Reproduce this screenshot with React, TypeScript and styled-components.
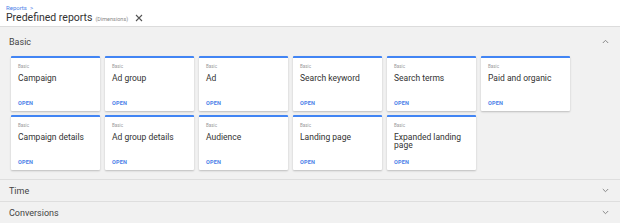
import React from 'react';
import styled, { createGlobalStyle } from 'styled-components';

const GlobalStyle = createGlobalStyle`
  html, body {
    margin: 0;
    padding: 0;
    background: #f1f1f1;
    font-family: Roboto, "Liberation Sans", sans-serif;
  }
`;

const Page = styled.div`
  width: 620px;
  height: 223px;
  overflow: hidden;
  background: #f1f1f1;
`;

const Header = styled.div`
  height: 27px;
  background: #fff;
  border-bottom: 1px solid #dcdcdc;
  padding: 4px 0 0 6px;
  box-sizing: border-box;
`;

const Crumb = styled.div`
  font-size: 6px;
  color: #4a80e8;
  line-height: 7px;
`;

const TitleRow = styled.div`
  display: flex;
  align-items: center;
  gap: 6px;
`;

const Title = styled.span`
  font-size: 10.5px;
  color: #333;
`;

const Sub = styled.span`
  font-size: 5.5px;
  color: #888;
  margin-left: -3px;
  margin-top: 2px;
`;

const Section = styled.div`
  border-bottom: 1px solid #dedede;
`;

const SectionHead = styled.div<{ $h: number }>`
  height: ${p => p.$h}px;
  display: flex;
  align-items: center;
  justify-content: space-between;
  padding: 0 11px 0 9px;
  font-size: 9px;
  color: #444;
`;

const Grid = styled.div`
  display: grid;
  grid-template-columns: repeat(6, 89px);
  column-gap: 5px;
  row-gap: 4px;
  padding: 0 0 9px 11px;
`;

const Card = styled.div`
  background: #fff;
  border-top: 2px solid #4285f4;
  border-radius: 1px;
  box-shadow: 0 1px 2px rgba(0, 0, 0, 0.22);
  padding: 6px 7px 0 7px;
  height: 47px;
  display: flex;
  flex-direction: column;
`;

const Kind = styled.div`
  font-size: 4.5px;
  color: #999;
  line-height: 6px;
`;

const CardTitle = styled.div`
  font-size: 8.5px;
  color: #333;
  line-height: 8px;
  margin-top: 4px;
  flex: 1;
`;

const Open = styled.div`
  font-size: 5.5px;
  font-weight: 700;
  color: #4a80e8;
  letter-spacing: 0.2px;
  margin-bottom: 5px;
`;

const Chevron = ({ up }: { up?: boolean }) => (
  <svg width="7" height="5" viewBox="0 0 7 5">
    <path
      d={up ? 'M0.8 4 L3.5 1.3 L6.2 4' : 'M0.8 1 L3.5 3.7 L6.2 1'}
      fill="none"
      stroke="#888"
      strokeWidth="1"
    />
  </svg>
);

const reports = [
  'Campaign',
  'Ad group',
  'Ad',
  'Search keyword',
  'Search terms',
  'Paid and organic',
  'Campaign details',
  'Ad group details',
  'Audience',
  'Landing page',
  'Expanded landing page',
];

export default function App() {
  return (
    <Page>
      <GlobalStyle />
      <Header>
        <Crumb>Reports &nbsp;&gt;</Crumb>
        <TitleRow>
          <Title>Predefined reports</Title>
          <Sub>(Dimensions)</Sub>
          <svg width="8" height="8" viewBox="0 0 8 8" style={{ marginLeft: 1 }}>
            <path d="M1 1 L7 7 M7 1 L1 7" stroke="#555" strokeWidth="1.1" />
          </svg>
        </TitleRow>
      </Header>
      <Section>
        <SectionHead $h={29}>
          <span>Basic</span>
          <Chevron up />
        </SectionHead>
        <Grid>
          {reports.map(r => (
            <Card key={r}>
              <Kind>Basic</Kind>
              <CardTitle>{r}</CardTitle>
              <Open>OPEN</Open>
            </Card>
          ))}
        </Grid>
      </Section>
      <Section>
        <SectionHead $h={21}>
          <span>Time</span>
          <Chevron />
        </SectionHead>
      </Section>
      <Section>
        <SectionHead $h={21}>
          <span>Conversions</span>
          <Chevron />
        </SectionHead>
      </Section>
    </Page>
  );
}
